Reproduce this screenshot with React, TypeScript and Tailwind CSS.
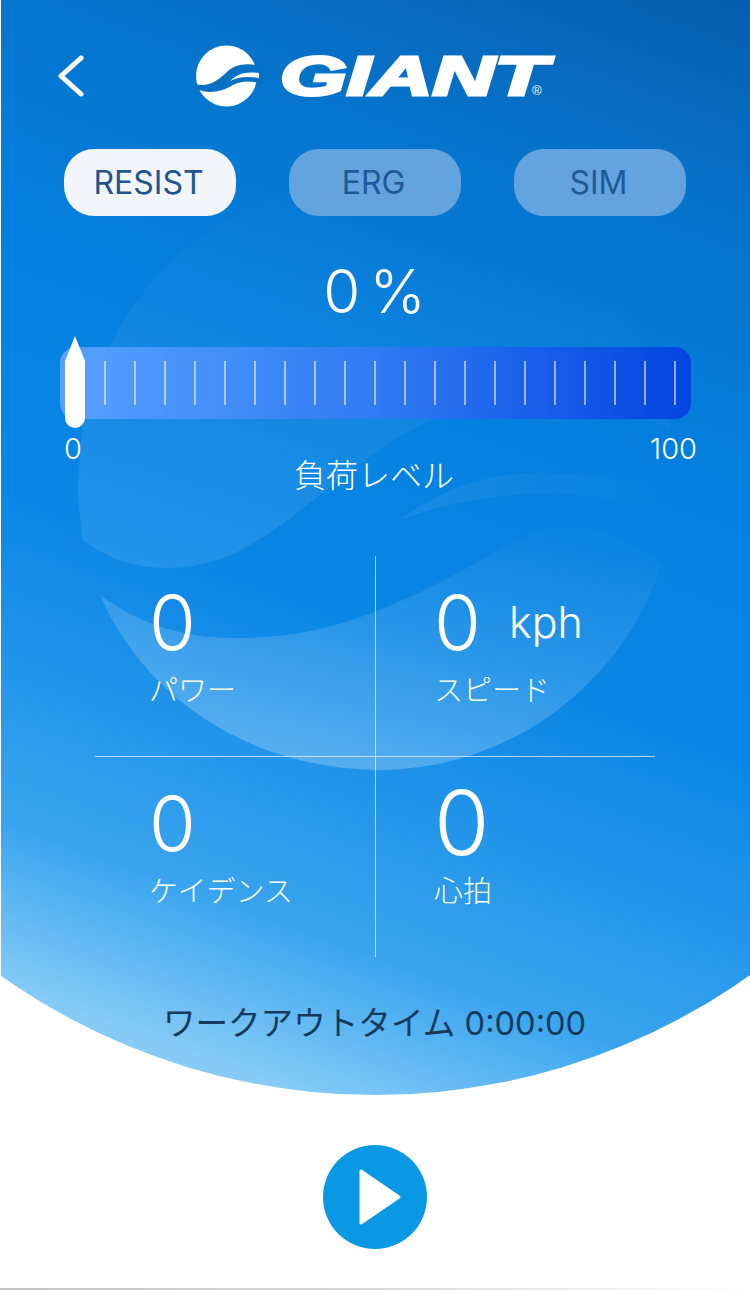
const ticks = Array.from({ length: 20 }, (_, i) => i);

function Logo() {
  return (
    <div className="relative flex items-center w-[360px] h-[62px]">
      <svg width="80" height="70" viewBox="0 0 80 70" className="shrink-0 -ml-[5px]">
        <circle cx="35.5" cy="35" r="30.5" fill="#fff" />
        <path
          d="M3 43 C18 47 27 39 36 31 C43 24 53 21 72 25 L72 43 C58 39 50 40 42 44 C32 50 18 54 6 48 Z"
          fill="#0670c4"
        />
        <path d="M39 40 C46 33 54 30 68 32 L68 37 C56 35 47 36 39 40 Z" fill="#fff" />
      </svg>
      <span className="absolute left-[84px] top-[-1px] origin-left scale-x-[1.56] text-[55px] leading-[64px] font-black italic text-white font-['Liberation_Sans',sans-serif] [-webkit-text-stroke:3px_white]">
        GIANT
      </span>
      <span className="absolute left-[336px] top-[39px] text-[13px] leading-none text-white font-['Liberation_Sans',sans-serif]">
        ®
      </span>
    </div>
  );
}

function ModeButton({ label, active }: { label: string; active?: boolean }) {
  return (
    <div
      className={`w-[172px] h-[67px] rounded-[30px] flex items-center justify-center pr-[3px] text-[32px] ${
        active ? 'bg-[#f2f6fb] text-[#1f5590]' : 'bg-[#63a3de] text-[#1d5a98]'
      }`}
    >
      {label}
    </div>
  );
}

function Stat({
  value,
  label,
  unit,
  big,
  className
}: {
  value: string;
  label: string;
  unit?: string;
  big?: boolean;
  className: string;
}) {
  return (
    <div className={`flex flex-col ${className}`}>
      <div className="flex items-center h-[80px]">
        <span className={`font-light leading-none ${big ? 'text-[90px]' : 'text-[76px]'}`}>{value}</span>
        {unit && <span className="ml-[28px] text-[43px] font-light leading-none">{unit}</span>}
      </div>
      <span className="text-[29px] font-light leading-[36px] mt-[11px]">{label}</span>
    </div>
  );
}

export default function App() {
  return (
    <div className="relative w-[750px] h-[1290px] bg-white overflow-hidden font-['Inter','Noto_Sans_CJK_JP',sans-serif]">
      {/* Hero */}
      <div className="relative h-[1095px] border-l border-white text-white [clip-path:circle(646px_at_375px_449px)] bg-[linear-gradient(200deg,#075eae_0%,#0676cf_20%,#0480e0_37%,#0a87e6_56%,#2697ea_70%,#3aa5ee_80%,#85cbf6_92%)]">
        {/* watermark */}
        <svg className="absolute left-0 top-0 pointer-events-none" width="750" height="1095" viewBox="0 0 750 1095">
          <defs>
            <linearGradient id="wmTop" x1="0.1" y1="1" x2="0.5" y2="0.1">
              <stop offset="0" stopColor="#fff" stopOpacity="0.1" />
              <stop offset="1" stopColor="#fff" stopOpacity="0" />
            </linearGradient>
            <linearGradient id="wmSliver" x1="0" y1="0.5" x2="1" y2="0.5">
              <stop offset="0" stopColor="#fff" stopOpacity="0.07" />
              <stop offset="1" stopColor="#fff" stopOpacity="0" />
            </linearGradient>
            <linearGradient id="wmBottom" x1="0.3" y1="1" x2="0.7" y2="0">
              <stop offset="0" stopColor="#fff" stopOpacity="0.26" />
              <stop offset="1" stopColor="#fff" stopOpacity="0.02" />
            </linearGradient>
          </defs>
          <path
            d="M82 540 C76 500 76 480 78 470 A298 298 0 0 1 670 430 C600 395 520 380 440 415 C360 450 300 520 240 550 C180 580 120 570 82 540 Z"
            fill="url(#wmTop)"
          />
          <path d="M398 520 C440 490 490 470 550 473 C600 475 640 480 668 495 L668 520 C590 480 480 490 398 520 Z" fill="url(#wmSliver)" />
          <path
            d="M99 595 C160 640 220 640 265 637 C340 632 410 600 480 560 C520 535 545 527 570 527 C600 528 640 545 660 566 A298 298 0 0 1 383 770 C240 770 140 690 99 595 Z"
            fill="url(#wmBottom)"
          />
        </svg>

        <div className="relative flex flex-col">
          {/* Header */}
          <div className="flex items-center h-[62px] mt-[45px] pl-[57px]">
            <svg width="26" height="42" viewBox="0 0 26 42" fill="none" className="shrink-0">
              <path d="M23 3 L3 21 L23 39" stroke="#fff" strokeWidth="5" strokeLinecap="round" strokeLinejoin="round" />
            </svg>
            <div className="ml-[112px]">
              <Logo />
            </div>
          </div>

          {/* Mode buttons */}
          <div className="flex gap-[53px] pl-[63px] mt-[42px]">
            <ModeButton label="RESIST" active />
            <ModeButton label="ERG" />
            <ModeButton label="SIM" />
          </div>

          {/* Percent */}
          <div className="flex justify-center items-center gap-[9px] h-[60px] mt-[45px] pr-[2px] text-[60px] font-light leading-none">
            <span>0</span>
            <span>%</span>
          </div>

          {/* Load slider */}
          <div className="relative ml-[59px] mt-[26px] w-[631px] h-[72px] rounded-[16px] bg-[linear-gradient(90deg,#57a2ff_0%,#2f7bf2_50%,#0344e0_100%)] flex items-center pl-[44px] gap-[28.5px]">
            {ticks.map((t) => (
              <div key={t} className="w-[1.5px] h-[44px] bg-white/55" />
            ))}
            <svg className="absolute left-[5px] top-[-11px]" width="20" height="92" viewBox="0 0 20 92">
              <path d="M10 0 L20 25 V82 A10 10 0 0 1 0 82 V25 Z" fill="#fff" />
            </svg>
          </div>
          <div className="flex justify-between ml-[63px] w-[633px] mt-[15px] text-[29px] font-light leading-[30px]">
            <span>0</span>
            <span>100</span>
          </div>
          <div className="text-center text-[32px] font-light leading-[40px] -mt-[8px] pr-[3px]">負荷レベル</div>

          {/* Stats grid */}
          <div className="relative grid grid-cols-2 grid-rows-2 w-[560px] h-[401px] ml-[94px] mt-[60px]">
            <div className="absolute left-[279.5px] top-0 w-[1.5px] h-full bg-white/65" />
            <div className="absolute left-0 top-[199.5px] w-full h-[1.5px] bg-white/65" />
            <Stat value="0" label="パワー" className="pl-[54px] pt-[26px]" />
            <Stat value="0" label="スピード" unit="kph" className="pl-[339px] -ml-[280px] pt-[26px]" />
            <Stat value="0" label="ケイデンス" className="pl-[54px] pt-[26px]" />
            <Stat value="0" label="心拍" big className="pl-[339px] -ml-[280px] pt-[26px]" />
          </div>

          {/* Workout time */}
          <div className="text-center text-[32.6px] leading-[40px] font-normal text-[#143a5c] mt-[46px] pr-[2px]">
            ワークアウトタイム 0:00:00
          </div>
        </div>
      </div>

      {/* Play */}
      <div className="flex justify-center mt-[50px]">
        <div className="w-[104px] h-[104px] rounded-full bg-[#0998e3] flex items-center justify-center">
          <svg width="44" height="58" viewBox="0 0 44 58" className="ml-[10px]">
            <path d="M3 3 L41 29 L3 55 Z" fill="#fff" stroke="#fff" strokeWidth="3" strokeLinejoin="round" />
          </svg>
        </div>
      </div>

      <div className="absolute left-0 bottom-0 w-full h-[2px] bg-[linear-gradient(90deg,#c4c4c4_0%,#d8d8d8_50%,#fff_100%)]" />
    </div>
  );
}
